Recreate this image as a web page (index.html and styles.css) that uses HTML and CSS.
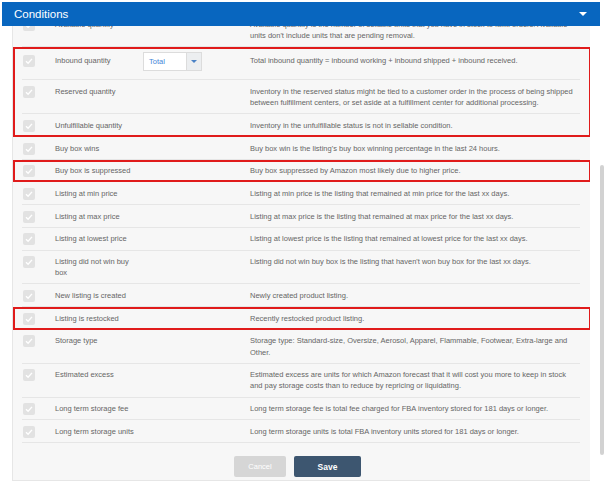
FILE: index.html
```html
<!DOCTYPE html>
<html lang="en">
<head>
    <meta charset="UTF-8">
    <meta name="viewport" content="width=device-width, initial-scale=1.0">
    <title>Conditions</title>
    <link rel="stylesheet" href="styles.css">
</head>
<body>
    <div class="modal">
        <div class="modal-head">
            <span class="modal-title">Conditions</span>
            <span class="caret"></span>
        </div>
        <div class="modal-body">
            <div class="panel">
                <div class="list">
                    <div class="list-inner">
                        <div class="row">
                            <span class="check"><svg viewBox="0 0 12 12"><path d="M3 6.3l2.1 2 3.9-4.4"/></svg></span>
                            <div class="label">Available quantity</div>
                            <div class="extra"></div>
                            <div class="desc">Available quantity is the number of sellable units that you have in stock to fulfill orders. Available units don't include units that are pending removal.</div>
                        </div>

                        <div class="marked">
                            <div class="row row-select">
                                <span class="check"><svg viewBox="0 0 12 12"><path d="M3 6.3l2.1 2 3.9-4.4"/></svg></span>
                                <div class="label">Inbound quantity</div>
                                <div class="extra">
                                    <div class="select">
                                        <span class="select-value">Total</span>
                                        <span class="select-arrow"></span>
                                    </div>
                                </div>
                                <div class="desc">Total inbound quantity = inbound working + inbound shipped + inbound received.</div>
                            </div>
                            <div class="row">
                                <span class="check"><svg viewBox="0 0 12 12"><path d="M3 6.3l2.1 2 3.9-4.4"/></svg></span>
                                <div class="label">Reserved quantity</div>
                                <div class="extra"></div>
                                <div class="desc">Inventory in the reserved status might be tied to a customer order in the process of being shipped between fulfillment centers, or set aside at a fulfillment center for additional processing.</div>
                            </div>
                            <div class="row">
                                <span class="check"><svg viewBox="0 0 12 12"><path d="M3 6.3l2.1 2 3.9-4.4"/></svg></span>
                                <div class="label">Unfulfillable quantity</div>
                                <div class="extra"></div>
                                <div class="desc">Inventory in the unfulfillable status is not in sellable condition.</div>
                            </div>
                        </div>

                        <div class="row">
                            <span class="check"><svg viewBox="0 0 12 12"><path d="M3 6.3l2.1 2 3.9-4.4"/></svg></span>
                            <div class="label">Buy box wins</div>
                            <div class="extra"></div>
                            <div class="desc">Buy box win is the listing's buy box winning percentage in the last 24 hours.</div>
                        </div>

                        <div class="marked">
                            <div class="row">
                                <span class="check"><svg viewBox="0 0 12 12"><path d="M3 6.3l2.1 2 3.9-4.4"/></svg></span>
                                <div class="label">Buy box is suppressed</div>
                                <div class="extra"></div>
                                <div class="desc">Buy box suppressed by Amazon most likely due to higher price.</div>
                            </div>
                        </div>

                        <div class="row">
                            <span class="check"><svg viewBox="0 0 12 12"><path d="M3 6.3l2.1 2 3.9-4.4"/></svg></span>
                            <div class="label">Listing at min price</div>
                            <div class="extra"></div>
                            <div class="desc">Listing at min price is the listing that remained at min price for the last xx days.</div>
                        </div>
                        <div class="row">
                            <span class="check"><svg viewBox="0 0 12 12"><path d="M3 6.3l2.1 2 3.9-4.4"/></svg></span>
                            <div class="label">Listing at max price</div>
                            <div class="extra"></div>
                            <div class="desc">Listing at max price is the listing that remained at max price for the last xx days.</div>
                        </div>
                        <div class="row">
                            <span class="check"><svg viewBox="0 0 12 12"><path d="M3 6.3l2.1 2 3.9-4.4"/></svg></span>
                            <div class="label">Listing at lowest price</div>
                            <div class="extra"></div>
                            <div class="desc">Listing at lowest price is the listing that remained at lowest price for the last xx days.</div>
                        </div>
                        <div class="row">
                            <span class="check"><svg viewBox="0 0 12 12"><path d="M3 6.3l2.1 2 3.9-4.4"/></svg></span>
                            <div class="label">Listing did not win buy box</div>
                            <div class="extra"></div>
                            <div class="desc">Listing did not win buy box is the listing that haven't won buy box for the last xx days.</div>
                        </div>
                        <div class="row">
                            <span class="check"><svg viewBox="0 0 12 12"><path d="M3 6.3l2.1 2 3.9-4.4"/></svg></span>
                            <div class="label">New listing is created</div>
                            <div class="extra"></div>
                            <div class="desc">Newly created product listing.</div>
                        </div>

                        <div class="marked">
                            <div class="row">
                                <span class="check"><svg viewBox="0 0 12 12"><path d="M3 6.3l2.1 2 3.9-4.4"/></svg></span>
                                <div class="label">Listing is restocked</div>
                                <div class="extra"></div>
                                <div class="desc">Recently restocked product listing.</div>
                            </div>
                        </div>

                        <div class="row">
                            <span class="check"><svg viewBox="0 0 12 12"><path d="M3 6.3l2.1 2 3.9-4.4"/></svg></span>
                            <div class="label">Storage type</div>
                            <div class="extra"></div>
                            <div class="desc">Storage type: Standard-size, Oversize, Aerosol, Apparel, Flammable, Footwear, Extra-large and Other.</div>
                        </div>
                        <div class="row">
                            <span class="check"><svg viewBox="0 0 12 12"><path d="M3 6.3l2.1 2 3.9-4.4"/></svg></span>
                            <div class="label">Estimated excess</div>
                            <div class="extra"></div>
                            <div class="desc">Estimated excess are units for which Amazon forecast that it will cost you more to keep in stock and pay storage costs than to reduce by repricing or liquidating.</div>
                        </div>
                        <div class="row">
                            <span class="check"><svg viewBox="0 0 12 12"><path d="M3 6.3l2.1 2 3.9-4.4"/></svg></span>
                            <div class="label">Long term storage fee</div>
                            <div class="extra"></div>
                            <div class="desc">Long term storage fee is total fee charged for FBA inventory stored for 181 days or longer.</div>
                        </div>
                        <div class="row">
                            <span class="check"><svg viewBox="0 0 12 12"><path d="M3 6.3l2.1 2 3.9-4.4"/></svg></span>
                            <div class="label">Long term storage units</div>
                            <div class="extra"></div>
                            <div class="desc">Long term storage units is total FBA inventory units stored for 181 days or longer.</div>
                        </div>
                    </div>
                </div>
                <div class="actions">
                    <button class="btn btn-cancel">Cancel</button>
                    <button class="btn btn-save">Save</button>
                </div>
            </div>
            <div class="scrollbar">
                <div class="thumb"></div>
            </div>
        </div>
    </div>
</body>
</html>
```

FILE: styles.css
```css
body {
    margin: 0;
    background: #fff;
    font-family: 'Liberation Sans', Arial, sans-serif;
}

.modal {
    width: 609px;
    height: 484px;
    padding-top: 2px;
    box-sizing: border-box;
    overflow: hidden;
}

.modal-head {
    margin-left: 2px;
    width: 598px;
    height: 24px;
    background: #0866bf;
    display: flex;
    align-items: center;
    justify-content: space-between;
    padding: 0 13px 0 12px;
    box-sizing: border-box;
    position: relative;
    z-index: 2;
}

.modal-title {
    color: #fff;
    font-size: 11.5px;
}

.caret {
    width: 0;
    height: 0;
    border-left: 4.5px solid transparent;
    border-right: 4.5px solid transparent;
    border-top: 4px solid #fff;
}

.modal-body {
    display: flex;
    height: 455px;
}

.panel {
    margin-left: 12px;
    width: 578px;
    background: #f7f7f7;
    border-left: 1px solid #e6e6e6;
    border-bottom: 1px solid #e6e6e6;
    box-sizing: border-box;
    display: flex;
    flex-direction: column;
}

.list {
    height: 418px;
    overflow: hidden;
    padding: 0 10px 0 9px;
}

.list-inner {
    margin-top: -13px;
}

.row {
    display: flex;
    align-items: flex-start;
    padding: 5.5px 0 5px;
    border-bottom: 1px solid #e6e6e6;
    font-size: 7.5px;
    line-height: 11.2px;
    color: #666;
}

.row-select {
    padding-bottom: 8px;
    line-height: 17px;
}

.row-select .check {
    margin-top: 3px;
}

.check {
    flex: none;
    width: 12px;
    height: 12px;
    margin: 0 20px -1px 1px;
    background: #e2e2e2;
    border-radius: 2px;
}

.check svg {
    display: block;
    width: 12px;
    height: 12px;
    fill: none;
    stroke: #fff;
    stroke-width: 1.4;
}

.label {
    width: 81px;
    margin-right: 7px;
    flex: none;
}

.extra {
    width: 107px;
    flex: none;
}

.desc {
    flex: 1;
}

.select {
    width: 59px;
    height: 19px;
    display: flex;
    background: #fff;
    border: 1px solid #dcdcdc;
    box-sizing: border-box;
}

.select-value {
    flex: 1;
    padding-left: 5px;
    color: #3f86d8;
    font-size: 7.5px;
    line-height: 17px;
}

.select-arrow {
    width: 14px;
    background: #eceef0;
    border-left: 1px solid #dcdcdc;
    display: flex;
    align-items: center;
    justify-content: center;
}

.select-arrow::after {
    content: '';
    border-left: 3px solid transparent;
    border-right: 3px solid transparent;
    border-top: 3px solid #4a82c6;
}

.marked {
    margin: 0 -11px 0 -9px;
    padding: 0 11px 0 9px;
    outline: 2px solid #e01b1b;
    outline-offset: -2px;
}

.actions {
    display: flex;
    justify-content: center;
    gap: 8px;
    padding: 12px 8px 0 0;
}

.btn {
    height: 21px;
    border: none;
    border-radius: 2px;
    color: #fff;
    font-family: 'Liberation Sans', Arial, sans-serif;
    padding: 0;
}

.btn-cancel {
    width: 52px;
    background: #d6d6d6;
    font-size: 7.5px;
}

.btn-save {
    width: 67px;
    background: #3d5670;
    font-size: 8.5px;
    font-weight: bold;
}

.scrollbar {
    width: 19px;
    padding-left: 10px;
    box-sizing: border-box;
}

.thumb {
    width: 4px;
    height: 290px;
    margin-top: 139px;
    background: #d2d2d2;
    border-radius: 2px;
}
```
